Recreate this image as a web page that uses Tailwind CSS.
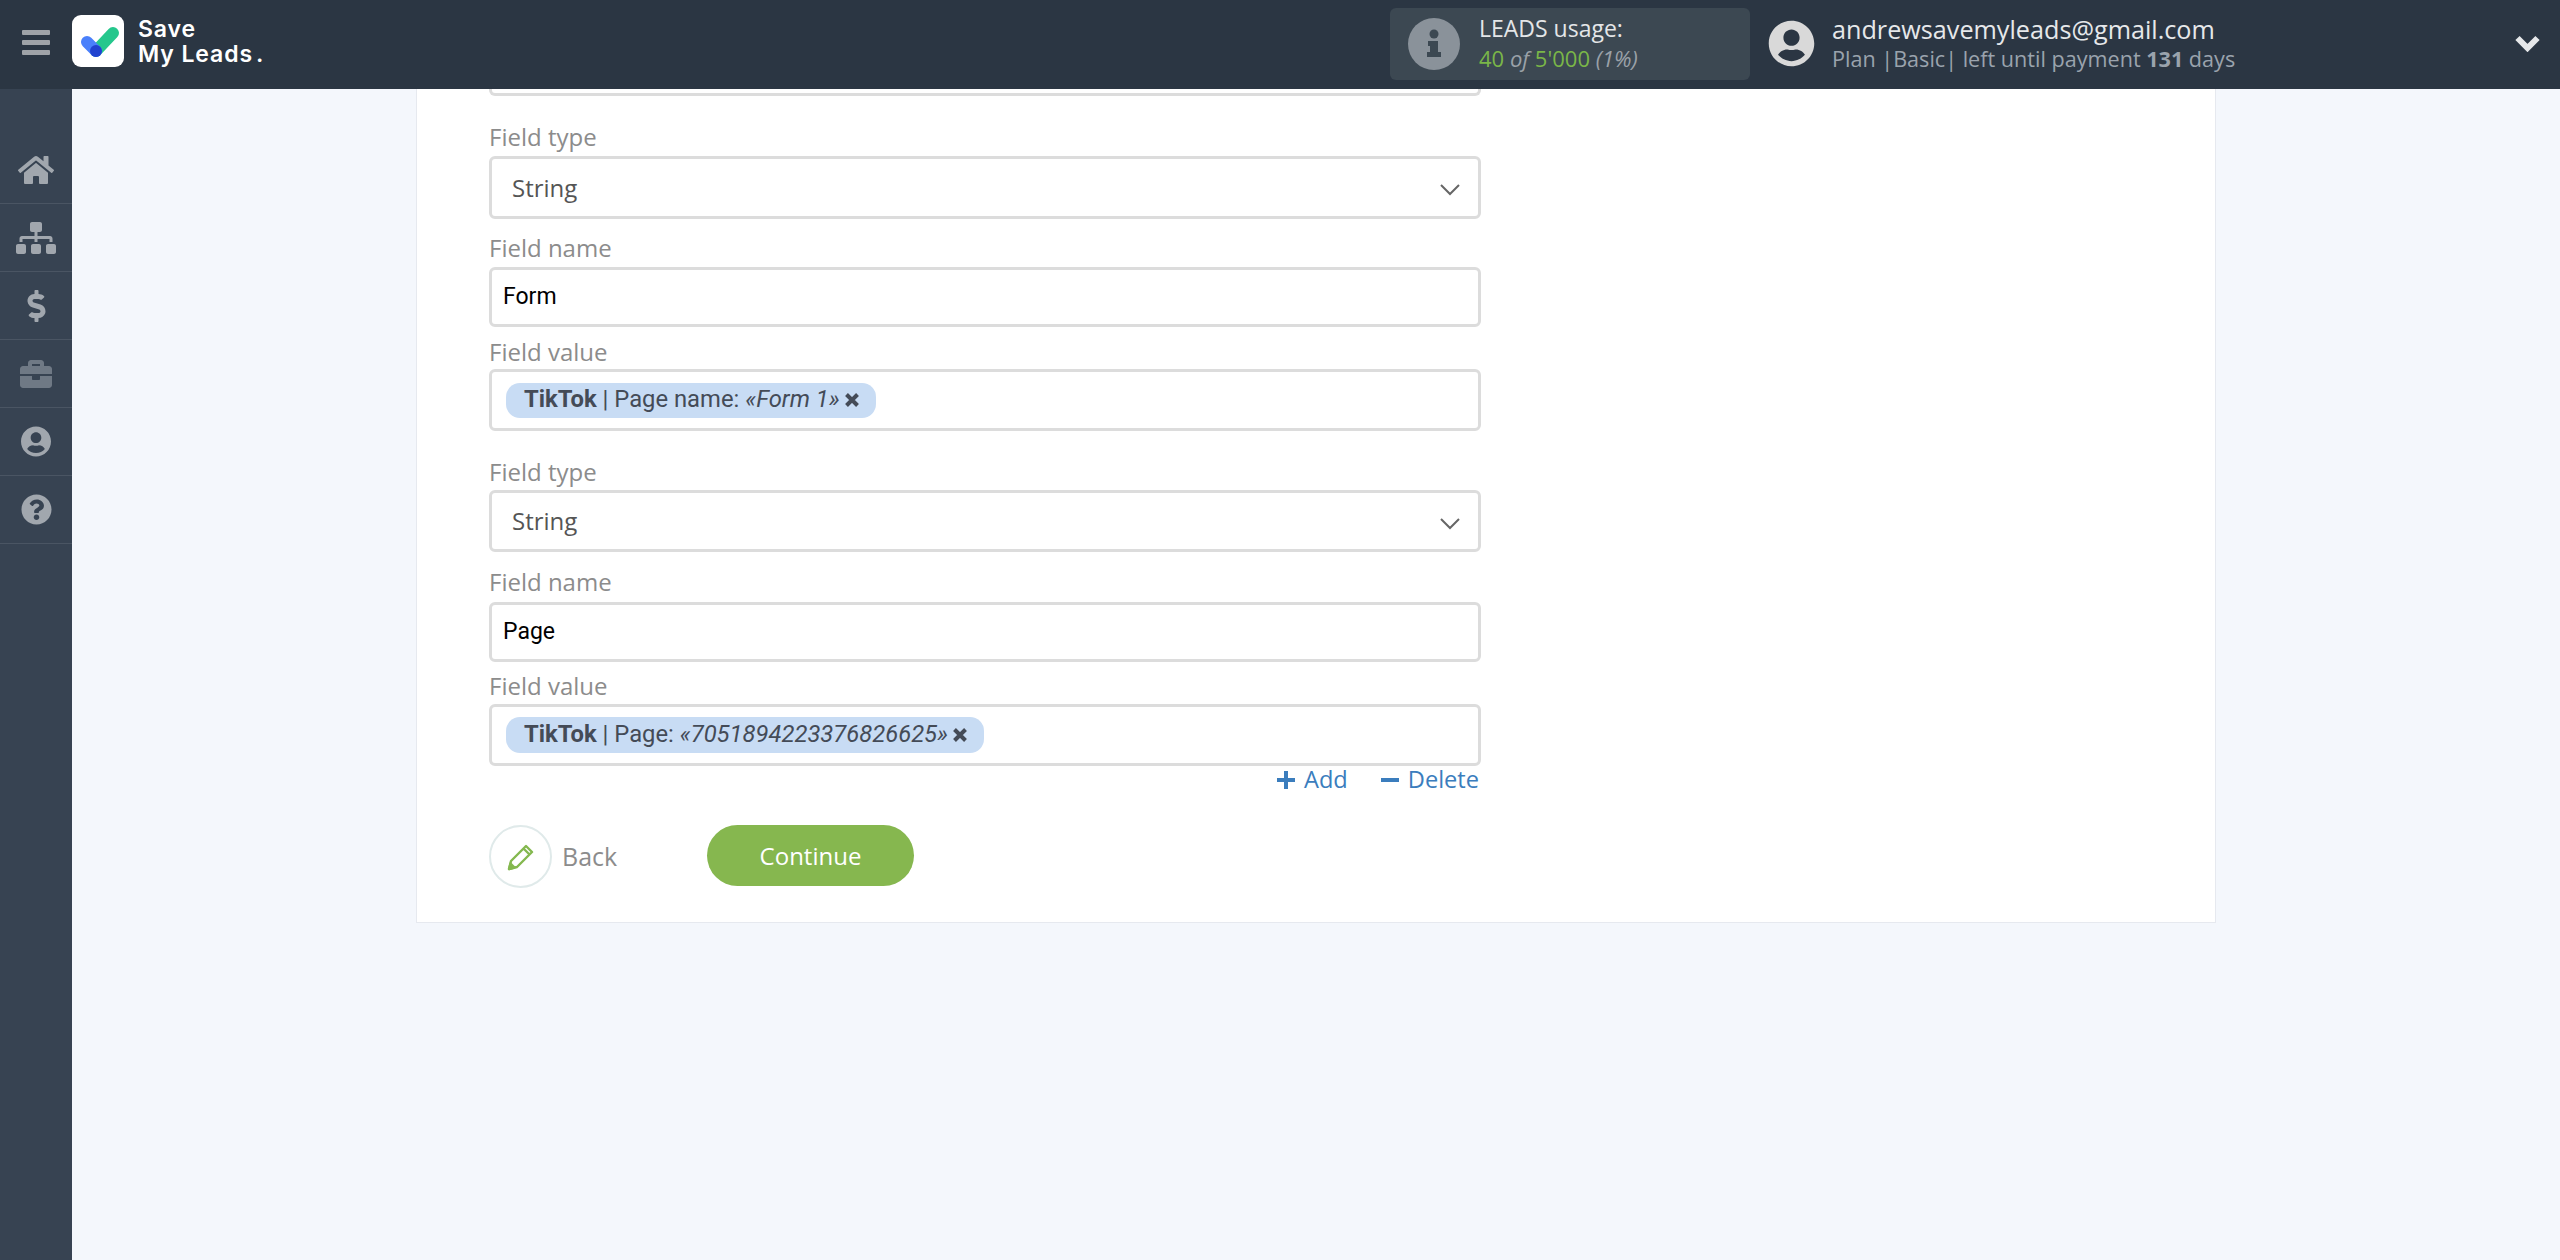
<!DOCTYPE html>
<html>
  <head>
    <meta charset="UTF-8" />
    <title>Save My Leads</title>
    <script src="https://cdn.jsdelivr.net/npm/@tailwindcss/browser@4"></script>
  </head>
  <body class="bg-[#f4f7fc] font-['Open_Sans',sans-serif] h-[1260px] overflow-hidden">
    <!-- Top bar -->
    <header class="h-[89px] bg-[#2b3643] flex items-center">
      <button class="w-[72px] flex flex-col gap-[5px] pl-[22px] mb-[5px]">
        <span class="block w-[28px] h-[5px] rounded-[1px] bg-[#9fa3a8]"></span>
        <span class="block w-[28px] h-[5px] rounded-[1px] bg-[#9fa3a8]"></span>
        <span class="block w-[28px] h-[5px] rounded-[1px] bg-[#9fa3a8]"></span>
      </button>
      <div class="w-[52px] h-[52px] bg-white rounded-[9px] mb-[7px]">
        <svg width="52" height="52" viewBox="0 0 52 52" fill="none" stroke-linecap="round">
          <path d="M41 18 L24 36" stroke="#25c78c" stroke-width="12" />
          <path d="M15 27 L24 36" stroke="#4a80fb" stroke-width="12" />
          <circle cx="24" cy="36" r="6" fill="#2142cf" />
        </svg>
      </div>
      <div class="ml-[14px] w-[192px] mb-[6px] font-['Inter',sans-serif] font-semibold text-white text-[23px] leading-[25px] tracking-[0.9px]">
        <div>Save</div>
        <div>My Leads<span class="ml-[3px]">.</span></div>
      </div>
      <div class="ml-[1060px] w-[360px] h-[72px] mb-[1px] bg-[#3c4852] rounded-[6px] flex items-center pl-[18px]">
        <svg width="52" height="52" viewBox="0 0 52 52">
          <circle cx="26" cy="26" r="26" fill="#8a929a" />
          <circle cx="26" cy="16" r="4.5" fill="#3c4852" />
          <path d="M20 23h10v11h3v5H19v-5h3v-6h-2z" fill="#3c4852" />
        </svg>
        <div class="ml-[19px] mb-[2px] leading-[30px]">
          <div class="text-[23px] text-[#e4e6e8]">LEADS usage:</div>
          <div class="text-[22px] italic text-[#9aa1a8]"><span class="not-italic text-[#7ab648]">40</span> of <span class="not-italic text-[#7ab648]">5'000</span> (1%)</div>
        </div>
      </div>
      <svg class="ml-[18px] mb-[2px]" width="47" height="47" viewBox="0 0 496 512" fill="#d9d9d9">
        <path d="M248 8C111 8 0 119 0 256s111 248 248 248 248-111 248-248S385 8 248 8zm0 96c48.6 0 88 39.4 88 88s-39.4 88-88 88-88-39.4-88-88 39.4-88 88-88zm0 344c-58.7 0-111.3-26.6-146.5-68.2 18.8-35.4 55.6-59.8 98.5-59.8 2.4 0 4.8.4 7.1 1.1 13 4.2 26.6 6.9 40.9 6.9 14.3 0 28-2.7 40.9-6.9 2.3-.7 4.7-1.1 7.1-1.1 42.9 0 79.7 24.4 98.5 59.8C359.3 421.4 306.7 448 248 448z" />
      </svg>
      <div class="ml-[17px] mb-[2px]">
        <div class="text-[25.2px] leading-[31px] text-[#e6e8ea]">andrewsavemyleads@gmail.com</div>
        <div class="text-[21.6px] leading-[28px] text-[#9aa3ad]">Plan |Basic| left until payment <b class="font-bold">131</b> days</div>
      </div>
      <svg class="ml-auto mr-[20px] mb-[3px]" width="25" height="17" viewBox="0 0 25 17" fill="none" stroke="#e6e8ea" stroke-width="6">
        <path d="M2.5 3 L12.5 13 L22.5 3" />
      </svg>
    </header>

    <div class="flex h-[1171px]">
      <!-- Sidebar -->
      <nav class="w-[72px] shrink-0 bg-[#374352] pt-[47px]">
        <div class="h-[68px] border-b border-[#4a5563] flex items-center justify-center">
          <svg width="36" height="32" viewBox="0 0 576 512" fill="#a1a7ae"><path d="M280.37 148.26L96 300.11V464a16 16 0 0 0 16 16l112.06-.29a16 16 0 0 0 15.92-16V368a16 16 0 0 1 16-16h64a16 16 0 0 1 16 16v95.64a16 16 0 0 0 16 16.05L464 480a16 16 0 0 0 16-16V300L295.67 148.26a12.19 12.19 0 0 0-15.3 0zM571.6 251.47L488 182.56V44.05a12 12 0 0 0-12-12h-56a12 12 0 0 0-12 12v72.61L318.47 43a48 48 0 0 0-61 0L4.34 251.47a12 12 0 0 0-1.6 16.9l25.5 31A12 12 0 0 0 45.15 301l235.22-193.74a12.19 12.19 0 0 1 15.3 0L530.9 301a12 12 0 0 0 16.9-1.6l25.5-31a12 12 0 0 0-1.7-16.93z" /></svg>
        </div>
        <div class="h-[68px] border-b border-[#4a5563] flex items-center justify-center">
          <svg width="40" height="32" viewBox="0 0 640 512" fill="#a1a7ae"><path d="M128 352H32c-17.67 0-32 14.33-32 32v96c0 17.67 14.33 32 32 32h96c17.67 0 32-14.33 32-32v-96c0-17.67-14.33-32-32-32zm-24-80h192v48h48v-48h192v48h48v-57.59c0-21.17-17.23-38.41-38.41-38.41H344v-64h40c17.67 0 32-14.33 32-32V32c0-17.67-14.33-32-32-32H256c-17.67 0-32 14.33-32 32v96c0 17.67 14.33 32 32 32h40v64H94.41C73.23 224 56 241.23 56 262.41V320h48v-48zm264 80h-96c-17.67 0-32 14.33-32 32v96c0 17.67 14.33 32 32 32h96c17.67 0 32-14.33 32-32v-96c0-17.67-14.33-32-32-32zm240 0h-96c-17.67 0-32 14.33-32 32v96c0 17.67 14.33 32 32 32h96c17.67 0 32-14.33 32-32v-96c0-17.67-14.33-32-32-32z" /></svg>
        </div>
        <div class="h-[68px] border-b border-[#4a5563] flex items-center justify-center">
          <svg width="19" height="32" viewBox="0 0 288 512" fill="#a1a7ae"><path d="M209.2 233.4l-108-31.6C88.7 198.2 80 186.5 80 173.5c0-16.3 13.2-29.5 29.5-29.5h66.3c12.2 0 24.2 3.7 34.2 10.5 6.1 4.1 14.3 3.1 19.5-2l34.8-34c7.1-6.9 6.1-18.4-1.8-24.5C238 74.8 207.4 64.1 176 64V16c0-8.8-7.2-16-16-16h-32c-8.8 0-16 7.2-16 16v48h-2.5C45.8 64-5.4 118.7.5 183.6c4.2 46.1 39.4 83.6 83.8 96.6l102.5 30c12.5 3.7 21.2 15.3 21.2 28.3 0 16.3-13.2 29.5-29.5 29.5h-66.3C100 368 88 364.3 78 357.5c-6.1-4.1-14.3-3.1-19.5 2l-34.8 34c-7.1 6.9-6.1 18.4 1.8 24.5 24.5 19.2 55.1 29.9 86.5 30v48c0 8.8 7.2 16 16 16h32c8.8 0 16-7.2 16-16v-48.2c46.6-.9 90.3-28.6 105.7-72.7 21.5-61.6-14.6-124.8-72.5-141.7z" /></svg>
        </div>
        <div class="h-[68px] border-b border-[#4a5563] flex items-center justify-center">
          <svg width="32" height="32" viewBox="0 0 512 512" fill="#6f7985"><path d="M320 336c0 8.84-7.16 16-16 16h-96c-8.84 0-16-7.16-16-16v-48H0v144c0 25.6 22.4 48 48 48h416c25.6 0 48-22.4 48-48V288H320v48zm144-208h-80V80c0-25.6-22.4-48-48-48H176c-25.6 0-48 22.4-48 48v48H48c-25.6 0-48 22.4-48 48v80h512v-80c0-25.6-22.4-48-48-48zm-144 0H192V96h128v32z" /></svg>
        </div>
        <div class="h-[68px] border-b border-[#4a5563] flex items-center justify-center">
          <svg width="30" height="31" viewBox="0 0 496 512" fill="#a1a7ae"><path d="M248 8C111 8 0 119 0 256s111 248 248 248 248-111 248-248S385 8 248 8zm0 96c48.6 0 88 39.4 88 88s-39.4 88-88 88-88-39.4-88-88 39.4-88 88-88zm0 344c-58.7 0-111.3-26.6-146.5-68.2 18.8-35.4 55.6-59.8 98.5-59.8 2.4 0 4.8.4 7.1 1.1 13 4.2 26.6 6.9 40.9 6.9 14.3 0 28-2.7 40.9-6.9 2.3-.7 4.7-1.1 7.1-1.1 42.9 0 79.7 24.4 98.5 59.8C359.3 421.4 306.7 448 248 448z" /></svg>
        </div>
        <div class="h-[68px] border-b border-[#4a5563] flex items-center justify-center">
          <svg width="31" height="31" viewBox="0 0 512 512" fill="#a1a7ae"><path d="M504 256c0 136.997-111.043 248-248 248S8 392.997 8 256C8 119.083 119.043 8 256 8s248 111.083 248 248zM262.655 90c-54.497 0-89.255 22.957-116.549 63.758-3.536 5.286-2.353 12.415 2.715 16.258l34.699 26.31c5.205 3.947 12.621 3.008 16.665-2.122 17.864-22.658 30.113-35.797 57.303-35.797 20.429 0 45.698 13.148 45.698 32.958 0 14.976-12.363 22.667-32.534 33.976C247.128 238.528 216 254.941 216 296v4c0 6.627 5.373 12 12 12h56c6.627 0 12-5.373 12-12v-1.333c0-28.462 83.186-29.647 83.186-106.667 0-58.002-60.165-102-116.531-102zM256 338c-25.365 0-46 20.635-46 46 0 25.364 20.635 46 46 46s46-20.636 46-46c0-25.365-20.635-46-46-46z" /></svg>
        </div>
      </nav>

      <!-- Main -->
      <main class="flex-1 pl-[344px]">
        <div class="w-[1800px] h-[834px] bg-white border border-t-0 border-[#e6e9ef] pl-[72px]">
          <div class="w-[992px]">
            <!-- field scrolled under the header -->
            <div class="h-[7px] border-[3px] border-t-0 border-[#dcdcdc] rounded-b-[6px]"></div>

            <!-- first group -->
            <label class="block mt-[26px] text-[24px] leading-[30px] text-[#8c8c8c]">Field type</label>
            <div class="mt-[4px] h-[63px] border-[3px] border-[#dcdcdc] rounded-[6px] flex items-center justify-between pl-[20px] pr-[18px] text-[24px] text-[#555]">
              String
              <svg class="mt-[5px]" width="20" height="12" viewBox="0 0 20 12" fill="none" stroke="#666" stroke-width="2"><path d="M1 1 L10 10 L19 1" /></svg>
            </div>
            <label class="block mt-[14px] text-[24px] leading-[30px] text-[#8c8c8c]">Field name</label>
            <div class="mt-[4px] h-[60px] border-[3px] border-[#dcdcdc] rounded-[6px] flex items-center pl-[11px] font-['Roboto',sans-serif] text-[23px] text-black">Form</div>
            <label class="block mt-[10px] text-[24px] leading-[30px] text-[#8c8c8c]">Field value</label>
            <div class="mt-[2px] h-[62px] border-[3px] border-[#dcdcdc] rounded-[6px] flex items-center pl-[14px]">
              <span class="h-[35px] rounded-[14px] bg-[#c8dcf4] flex items-center pl-[18px] pr-[17px] font-['Roboto',sans-serif] text-[23.8px] text-[#444b57]">
                <b class="font-bold">TikTok</b>&nbsp;| Page name:&nbsp;<i>«Form 1»</i>
                <svg class="ml-[5px]" width="14" height="14" viewBox="0 0 14 14" fill="none" stroke="#444b57" stroke-width="4"><path d="M1.5 1.5 L12.5 12.5 M12.5 1.5 L1.5 12.5" /></svg>
              </span>
            </div>

            <!-- second group -->
            <label class="block mt-[26px] text-[24px] leading-[30px] text-[#8c8c8c]">Field type</label>
            <div class="mt-[3px] h-[62px] border-[3px] border-[#dcdcdc] rounded-[6px] flex items-center justify-between pl-[20px] pr-[18px] text-[24px] text-[#555]">
              String
              <svg class="mt-[5px]" width="20" height="12" viewBox="0 0 20 12" fill="none" stroke="#666" stroke-width="2"><path d="M1 1 L10 10 L19 1" /></svg>
            </div>
            <label class="block mt-[15px] text-[24px] leading-[30px] text-[#8c8c8c]">Field name</label>
            <div class="mt-[5px] h-[60px] border-[3px] border-[#dcdcdc] rounded-[6px] flex items-center pl-[11px] font-['Roboto',sans-serif] text-[23px] text-black">Page</div>
            <label class="block mt-[9px] text-[24px] leading-[30px] text-[#8c8c8c]">Field value</label>
            <div class="mt-[3px] h-[62px] border-[3px] border-[#dcdcdc] rounded-[6px] flex items-center pl-[14px]">
              <span class="h-[36px] rounded-[14px] bg-[#c8dcf4] flex items-center pl-[18px] pr-[17px] font-['Roboto',sans-serif] text-[23.8px] text-[#444b57]">
                <b class="font-bold">TikTok</b>&nbsp;| Page:&nbsp;<i>«7051894223376826625»</i>
                <svg class="ml-[5px]" width="14" height="14" viewBox="0 0 14 14" fill="none" stroke="#444b57" stroke-width="4"><path d="M1.5 1.5 L12.5 12.5 M12.5 1.5 L1.5 12.5" /></svg>
              </span>
            </div>

            <!-- add / delete -->
            <div class="h-[28px] flex items-center justify-end text-[23.6px] text-[#3b7dbd]">
              <span class="flex items-center">
                <svg width="18" height="18" viewBox="0 0 18 18" fill="#3b7dbd"><path d="M7 0h4v7h7v4h-7v7H7v-7H0V7h7z" /></svg>
                <span class="ml-[9px]">Add</span>
              </span>
              <span class="flex items-center ml-[33px] mr-[2px]">
                <svg width="18" height="4" viewBox="0 0 18 4" fill="#3b7dbd"><path d="M0 0h18v4H0z" /></svg>
                <span class="ml-[9px]">Delete</span>
              </span>
            </div>

            <!-- actions -->
            <div class="mt-[31px] flex items-start">
              <div class="w-[63px] h-[63px] rounded-full border-[2px] border-[#e0eaea] flex items-center justify-center">
                <svg width="28" height="28" viewBox="0 0 28 28" fill="none" stroke="#84b84f" stroke-width="2.4" stroke-linejoin="round">
                  <path d="M2 26 L4 18 L19 3 L25 9 L10 24 Z M16.5 5.5 L22.5 11.5" />
                  <path d="M2 26 L3.5 20.5 L7.5 24.5 Z" fill="#84b84f" />
                </svg>
              </div>
              <span class="ml-[10px] w-[145px] h-[63px] flex items-center text-[25px] text-[#8c8c8c]">Back</span>
              <button class="w-[207px] h-[61px] rounded-full bg-[#86b74f] text-white text-[24px]">Continue</button>
            </div>
          </div>
        </div>
      </main>
    </div>
  </body>
</html>
